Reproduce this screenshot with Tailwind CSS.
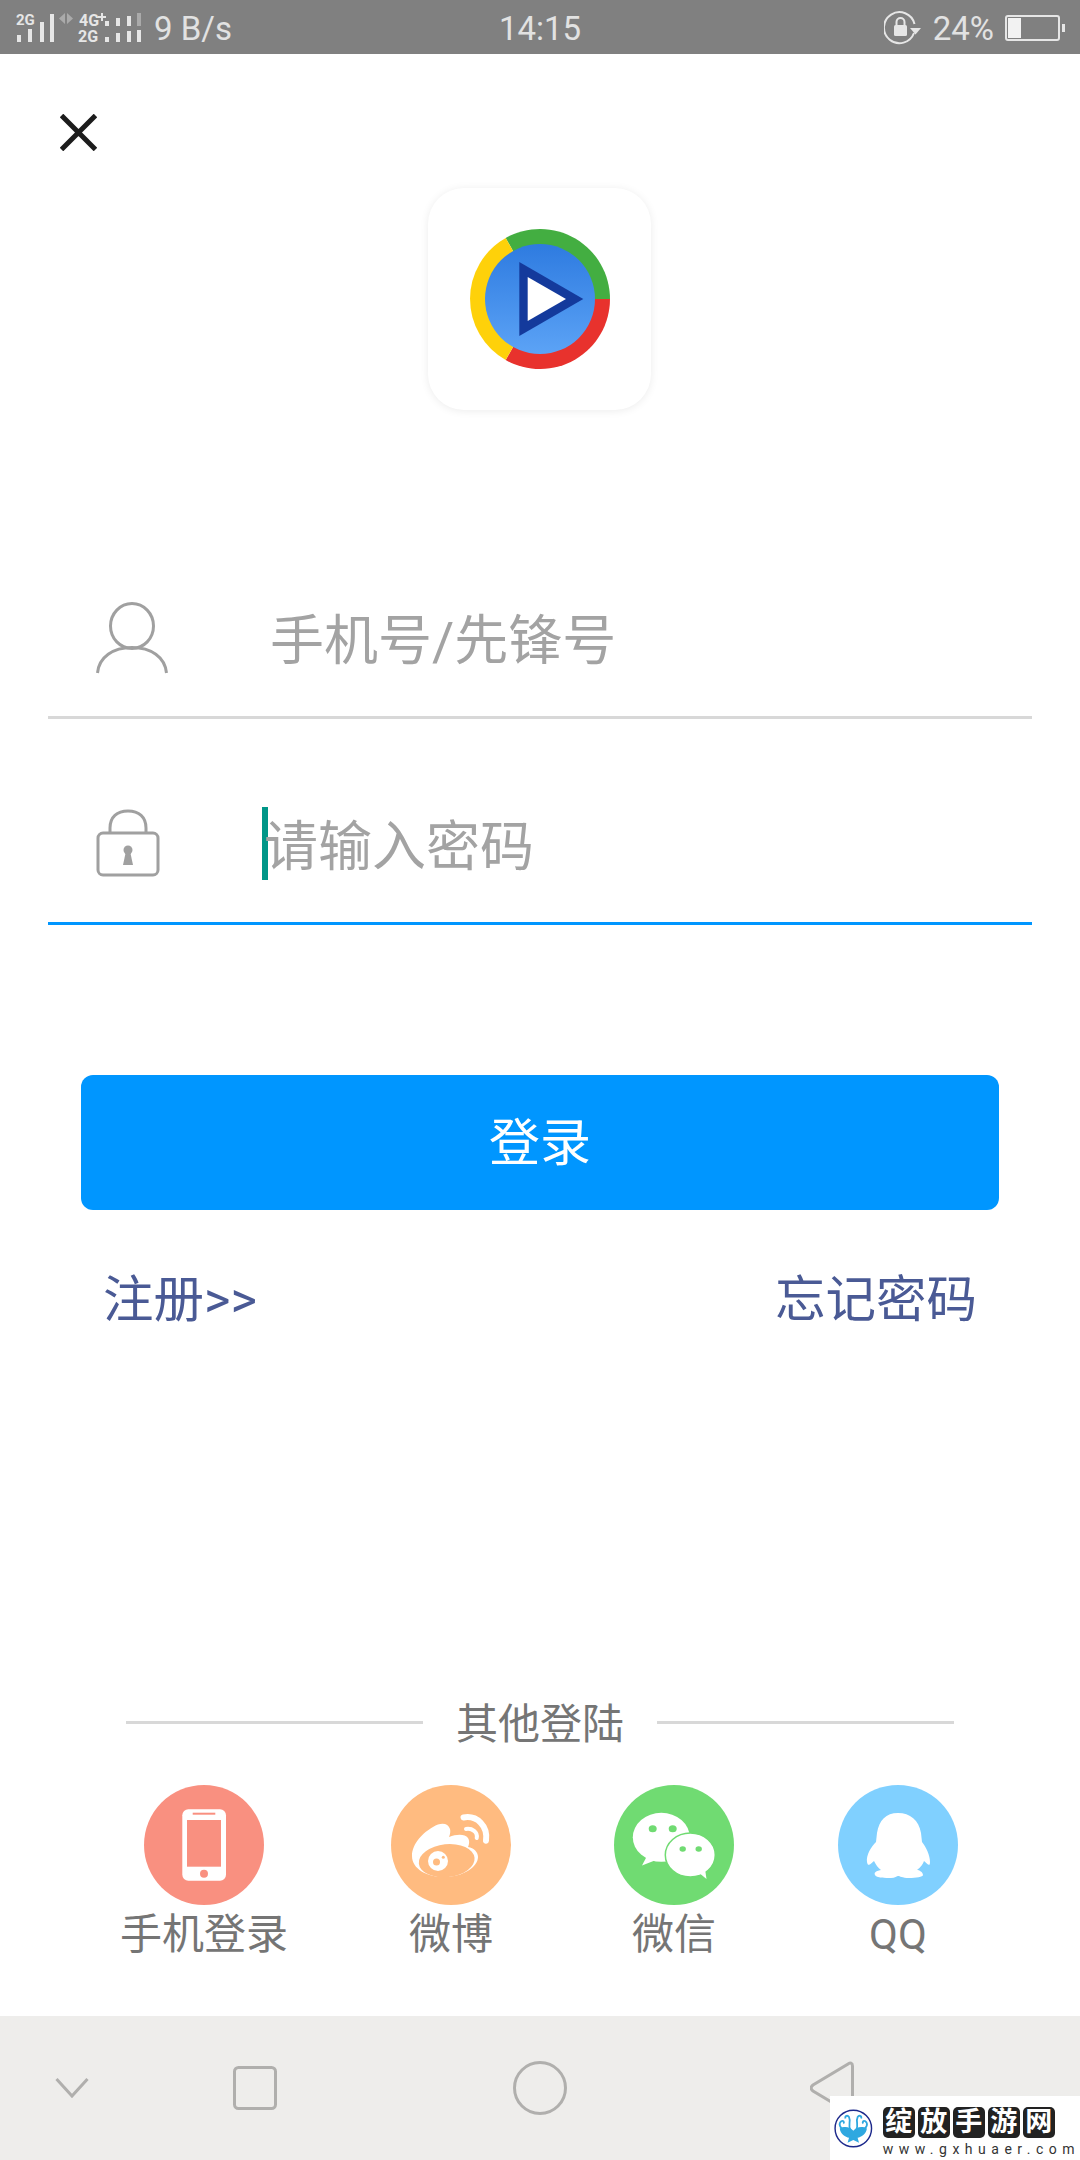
<!DOCTYPE html>
<html lang="zh-CN">
<head>
  <meta charset="UTF-8" />
  <meta name="viewport" content="width=device-width, initial-scale=1.0"/>
  <title>登录</title>
  <script src="https://cdn.jsdelivr.net/npm/@tailwindcss/browser@4"></script>
</head>
<body class="bg-white font-['Roboto','Noto_Sans_CJK_SC',sans-serif]">
<div class="w-[1080px] h-[2160px] flex flex-col relative overflow-hidden">

  <!-- Status bar -->
  <div class="h-[54px] bg-[#808080] text-[#e2e2e2] text-[33px] leading-[54px] grid grid-cols-[1fr_auto_1fr] items-center shrink-0">
    <div class="flex items-center pl-[16px]">
      <svg width="134" height="54" viewBox="0 0 134 54" fill="#e6e6e6" font-family="Roboto" font-weight="700" font-size="15">
        <text x="0" y="24">2G</text>
        <rect x="1" y="34" width="4" height="7"/><rect x="12" y="28" width="4" height="13"/><rect x="24" y="21" width="4" height="20"/><rect x="34" y="13" width="4" height="28"/>
        <path d="M49 12v11l-6-5.500zM51 12l6 5.500-6 5.500z" fill="#aaaaaa"/>
        <text x="63" y="25" font-size="16">4G</text>
        <path d="M85 12h2v3h3v2h-3v3h-2v-3h-3v-2h3z"/>
        <text x="62" y="41" font-size="16">2G</text>
        <rect x="89" y="20" width="4" height="5"/><rect x="100" y="17" width="4" height="8"/><rect x="111" y="15" width="4" height="10"/><rect x="121" y="12" width="4" height="13" fill="#aaaaaa"/>
        <rect x="89" y="36" width="4" height="5"/><rect x="100" y="32" width="4" height="9"/><rect x="111" y="30" width="4" height="11"/><rect x="121" y="29" width="4" height="12"/>
      </svg>
      <span class="ml-[4px] pt-[2px]">9 B/s</span>
    </div>
    <div class="pt-[2px]">14:15</div>
    <div class="flex items-center justify-end pr-[15px]">
      <svg width="37" height="54" viewBox="0 0 37 54" fill="none" stroke="#e6e6e6" stroke-width="2">
        <path d="M30 32A15.500 15.500 0 1 1 30.500 23"/>
        <path d="M26 27h11l-5.500 6.500z" fill="#e6e6e6" stroke="none"/>
        <rect x="10" y="24" width="13" height="11" rx="1.500" fill="#e6e6e6" stroke="none"/>
        <path d="M12.500 24v-3a4 4 0 0 1 8 0v3" stroke-width="2"/>
      </svg>
      <span class="ml-[12px] pt-[2px]">24%</span>
      <div class="ml-[11px] w-[55px] h-[26px] border-2 border-[#e6e6e6] rounded-[3px] p-[1px] flex">
        <div class="w-[13px] bg-[#f2f2f2]"></div>
      </div>
      <div class="w-[3px] h-[8px] ml-[2px] bg-[#e6e6e6]"></div>
    </div>
  </div>

  <!-- Close -->
  <svg class="ml-[60px] mt-[60px] shrink-0" width="37" height="37" viewBox="0 0 37 37" stroke="#1c1c1c" stroke-width="5" fill="none">
    <path d="M1.500 1.500L35.500 35.500M35.500 1.500L1.500 35.500"/>
  </svg>

  <!-- App logo -->
  <div class="mt-[37px] ml-[428px] w-[223px] h-[222px] shrink-0 rounded-[36px] bg-white shadow-[0_1px_8px_rgba(0,0,0,0.08)] flex items-center justify-center">
    <svg width="140" height="140" viewBox="-70 -70 140 140">
      <defs>
        <linearGradient id="disc" x1="0" y1="0" x2="0" y2="1">
          <stop offset="0" stop-color="#2e7be0"/>
          <stop offset="1" stop-color="#5ca3f6"/>
        </linearGradient>
      </defs>
      <path d="M0 0L-34.300 -61A70 70 0 0 1 70 0Z" fill="#43ae41"/>
      <path d="M0 0L70 0A70 70 0 0 1 -34.300 61Z" fill="#e8322d"/>
      <path d="M0 0L-34.300 61A70 70 0 0 1 -34.300 -61Z" fill="#fed10a"/>
      <circle r="55" fill="url(#disc)"/>
      <path d="M-20.700 -37L43.300 0L-20.700 37Z" fill="#143a9c"/>
      <path d="M-12.300 -22L26 0L-12.300 22Z" fill="#ffffff"/>
    </svg>
  </div>

  <!-- Account field -->
  <div class="mt-[156px] mx-[48px] h-[153px] border-b-[3px] border-[#d8d8d8] flex items-center shrink-0">
    <div class="w-[222px] pl-[48px] mb-[6px]">
      <svg width="72" height="72" viewBox="0 0 72 72" fill="none" stroke="#a0a0a0" stroke-width="3">
        <ellipse cx="36" cy="24" rx="21.500" ry="22.500"/>
        <path d="M1.500 71C3 55 17 45.500 36 45.500S69 55 70.500 71"/>
      </svg>
    </div>
    <span class="text-[54px] text-[#a3a3a3]">手机号/先锋号</span>
  </div>

  <!-- Password field -->
  <div class="mt-[53px] mx-[48px] h-[153px] border-b-[3px] border-[#0096ff] flex items-center shrink-0">
    <div class="w-[214px] pl-[48px] mb-[8px]">
      <svg width="64" height="68" viewBox="0 0 64 68" fill="none" stroke="#a0a0a0" stroke-width="3">
        <path d="M14 24V19C14 8 21 2 32 2S50 8 50 19V24"/>
        <rect x="2" y="24" width="60" height="42" rx="5"/>
        <circle cx="32" cy="41" r="4.500" fill="#a0a0a0" stroke="none"/>
        <path d="M30 42H34L37 56H27Z" fill="#a0a0a0" stroke="none"/>
      </svg>
    </div>
    <div class="w-[6px] h-[73px] bg-[#009688] mb-[8px]"></div>
    <span class="text-[54px] text-[#a3a3a3] -ml-[4px]">请输入密码</span>
  </div>

  <!-- Login button -->
  <button class="mt-[150px] mx-[81px] h-[135px] shrink-0 rounded-[12px] bg-[#0096ff] text-white text-[51px] pt-[4px]">登录</button>

  <!-- Links -->
  <div class="mt-[60px] pl-[103px] pr-[103px] flex justify-between text-[50.500px] leading-[60px] text-[#4a5a95] shrink-0">
    <span>注册&gt;&gt;</span>
    <span>忘记密码</span>
  </div>

  <!-- Other logins -->
  <div class="mt-auto flex items-center h-[50px] pl-[126px] text-[#757575] text-[42px] shrink-0">
    <div class="w-[297px] h-[3px] bg-[#d8d8d8] -mt-[2px]"></div>
    <span class="w-[234px] text-center pt-[2px]">其他登陆</span>
    <div class="w-[297px] h-[3px] bg-[#d8d8d8] -mt-[2px]"></div>
  </div>

  <div class="mt-[37px] pl-[122px] flex text-[#757575] text-[42px] leading-[50px] shrink-0">
    <div class="w-[164px] flex flex-col items-center">
      <svg class="mb-[5px] shrink-0" width="120" height="120" viewBox="0 0 120 120">
        <circle cx="60" cy="60" r="60" fill="#f99080"/>
        <rect x="38.300" y="24.300" width="43.700" height="71.400" rx="6" fill="#ffffff"/>
        <rect x="43" y="35" width="34" height="46.700" fill="#f99080"/>
        <rect x="48.700" y="27.700" width="22.600" height="2" fill="#f99080"/>
        <circle cx="60" cy="88.700" r="4" fill="#f99080"/>
      </svg>
      <span class="whitespace-nowrap">手机登录</span>
    </div>
    <div class="w-[164px] ml-[83px] flex flex-col items-center">
      <svg class="mb-[5px]" width="120" height="120" viewBox="0 0 120 120">
        <circle cx="60" cy="60" r="60" fill="#ffbb80"/>
        <path d="M21 71C21 58 33 47 42 42C50 37 57 38 59 44C60 48 58 52 58 52C66 49 74 49 77 53C79 56 78 60 77 62C83 63 87 67 87 72C87 82 72 92 53 92C36 92 21 84 21 71Z" fill="#ffffff"/>
        <ellipse cx="55.700" cy="75.700" rx="28" ry="16.500" transform="rotate(-6 55.700 75.700)" fill="#ffbb80"/>
        <circle cx="47" cy="76" r="10" fill="#ffffff"/>
        <circle cx="45.500" cy="77" r="3.500" fill="#ffbb80"/>
        <circle cx="52.300" cy="72.300" r="1.500" fill="#ffbb80"/>
        <path d="M72.500 32.500C86 30 97 41 95 55.700" fill="none" stroke="#ffffff" stroke-width="6" stroke-linecap="round"/>
        <path d="M75 44C81 43 87 47 85.700 53" fill="none" stroke="#ffffff" stroke-width="4" stroke-linecap="round"/>
      </svg>
      <span>微博</span>
    </div>
    <div class="w-[164px] ml-[59px] flex flex-col items-center">
      <svg class="mb-[5px]" width="120" height="120" viewBox="0 0 120 120">
        <circle cx="60" cy="60" r="60" fill="#70db72"/>
        <ellipse cx="47.300" cy="52.300" rx="28.500" ry="24.500" fill="#ffffff"/>
        <path d="M33 71L28 80.500L42 75Z" fill="#ffffff"/>
        <ellipse cx="76.300" cy="70" rx="25" ry="22" fill="#ffffff" stroke="#70db72" stroke-width="1.500"/>
        <path d="M84 87L92.500 94L91 84Z" fill="#ffffff"/>
        <ellipse cx="38.700" cy="43.700" rx="4" ry="3.500" fill="#70db72"/>
        <ellipse cx="58.700" cy="43.700" rx="4" ry="3.500" fill="#70db72"/>
        <ellipse cx="68.700" cy="64" rx="3.200" ry="2.800" fill="#70db72"/>
        <ellipse cx="84.700" cy="64" rx="3.200" ry="2.800" fill="#70db72"/>
      </svg>
      <span>微信</span>
    </div>
    <div class="w-[164px] ml-[60px] flex flex-col items-center">
      <svg class="mb-[5px]" width="120" height="120" viewBox="0 0 120 120">
        <circle cx="60" cy="60" r="60" fill="#80d0ff"/>
        <path d="M60 28C48 28 41 35 39 48L38 57C33 62 28 70 29 77C30 83 33 78 36 76C38 80 40 83 43 85C37 86 36 88 37 90C38 93 48 93 53 93C57 93 59 91 60 91C62 91 64 93 71 93C78 93 85 92 85 90C85 87 81 85 79 85C83 82 85 79 86 76C89 78 92 83 92 77C92 70 88 62 84 57L83 48C81 35 72 28 60 28Z" fill="#ffffff"/>
      </svg>
      <span>QQ</span>
    </div>
  </div>

  <!-- Nav bar -->
  <div class="mt-[56px] h-[144px] bg-[#eeedeb] flex items-center shrink-0 relative">
    <svg class="ml-[55px]" width="34" height="20" viewBox="0 0 34 20" fill="none" stroke="#b0afad" stroke-width="3"><path d="M1.500 1L17 18L32.500 1"/></svg>
    <svg class="ml-[144px]" width="44" height="44" viewBox="0 0 44 44" fill="none" stroke="#b0afad" stroke-width="3"><rect x="1.500" y="1.500" width="41" height="41" rx="4"/></svg>
    <svg class="ml-[236px]" width="54" height="54" viewBox="0 0 54 54" fill="none" stroke="#b0afad" stroke-width="3"><circle cx="27" cy="27" r="25.500"/></svg>
    <svg class="ml-[243px]" width="44" height="54" viewBox="0 0 44 54" fill="none" stroke="#b0afad" stroke-width="3"><path d="M42.500 5C42.500 2 40 1 38 3L3 24C0.500 26 0.500 28 3 30L38 51C40 53 42.500 52 42.500 49Z"/></svg>

    <!-- Watermark -->
    <div class="absolute right-0 bottom-0 w-[250px] h-[64px] bg-white flex items-start pl-[4px] pt-[6px]">
      <svg width="53" height="53" viewBox="0 0 54 54">
        <circle cx="27" cy="27" r="25.500" fill="#ffffff" stroke="#1d2a8c" stroke-width="2"/>
        <path d="M8 27C15 23 23 25 27 30C31 25 39 23 46 27C45 35 38 39 33 40L35 47L27 43L19 47L21 40C16 39 9 35 8 27Z" fill="#2fa8e0"/>
        <path d="M23 29C19 23 24 17 21 11C19 8 15 9 16 13M31 29C35 23 30 17 33 11C35 8 39 9 38 13M14 28C8 27 6 20 10 17C13 15 15 18 13 20M40 28C46 27 48 20 44 17C41 15 39 18 41 20" fill="none" stroke="#2fa8e0" stroke-width="2.500"/>
      </svg>
      <div class="ml-[10px] flex flex-col">
        <div class="flex gap-[3px] mt-[5px] text-white font-bold text-[27px] leading-[31px]">
          <span class="w-[32px] h-[31px] bg-[#222222] rounded-[5px] text-center">绽</span>
          <span class="w-[32px] h-[31px] bg-[#222222] rounded-[5px] text-center">放</span>
          <span class="w-[32px] h-[31px] bg-[#222222] rounded-[5px] text-center">手</span>
          <span class="w-[32px] h-[31px] bg-[#222222] rounded-[5px] text-center">游</span>
          <span class="w-[32px] h-[31px] bg-[#222222] rounded-[5px] text-center">网</span>
        </div>
        <span class="mt-[3px] text-[#333333] text-[14px] leading-[16px] tracking-[5.500px] whitespace-nowrap">www.gxhuaer.com</span>
      </div>
    </div>
  </div>
</div>
</body>
</html>
